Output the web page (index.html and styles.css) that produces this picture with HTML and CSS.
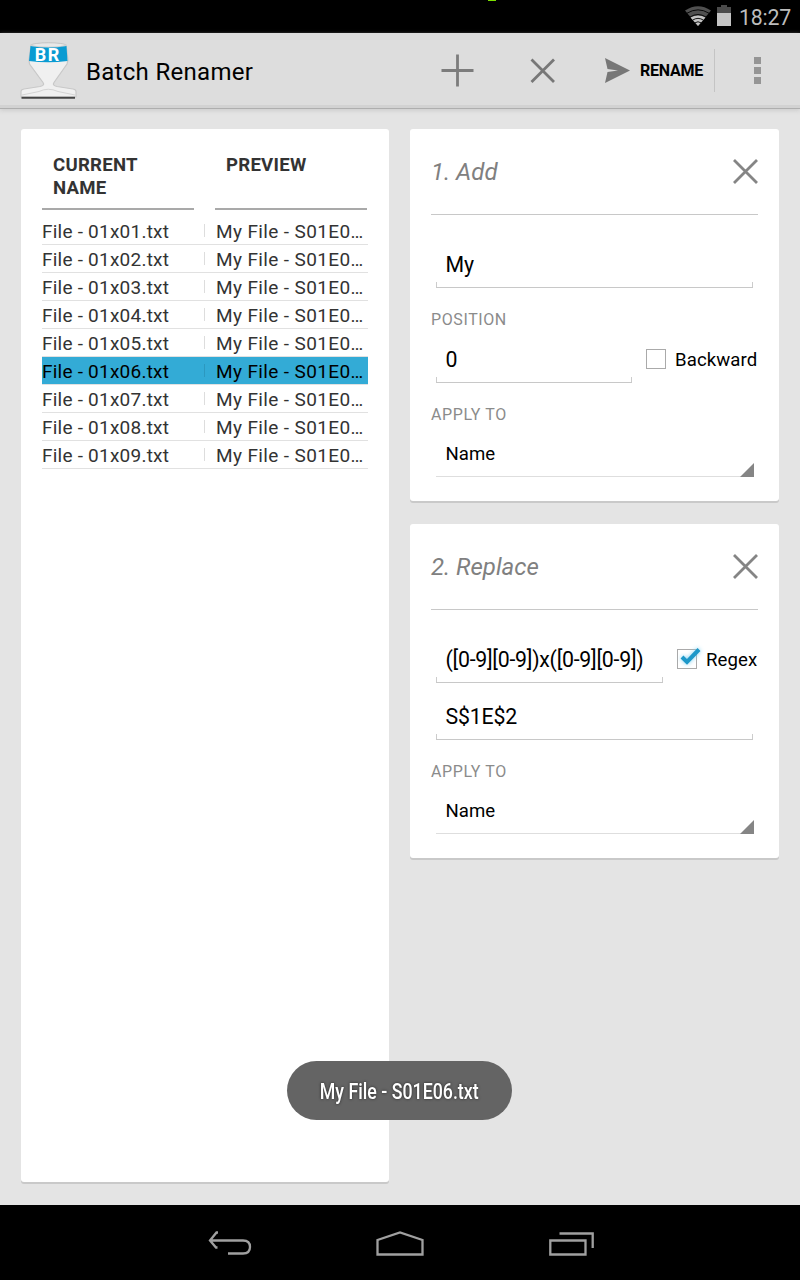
FILE: index.html
```html
<!DOCTYPE html>
<html lang="en">
<head>
<meta charset="utf-8">
<title>Batch Renamer</title>
<link rel="stylesheet" href="styles.css">
</head>
<body>
<div class="screen">
  <div class="status">
    <i class="notch"></i>
    <svg class="wifi" width="26" height="20" viewBox="0 0 26 20"><path d="M0 4.500Q13-4 26 4.500L13 20Z" fill="#505050"/><path d="M5.500 11.500Q13 7.500 20.500 11.500L13 20Z" fill="#c4c4c4"/><path d="M2 7.200Q13 .5 24 7.200M5 11Q13 6 21 11M7.500 14.200Q13 10.500 18.500 14.200M9.500 17Q13 14.500 16.500 17" fill="none" stroke="#000" stroke-width=".9"/></svg>
    <svg class="battery" width="14" height="21" viewBox="0 0 14 21"><path d="M0 2h4V0h6v2h4v6H0z" fill="#4b4b4b"/><path d="M0 8h14v13H0z" fill="#c4c4c4"/></svg>
    <span class="clock"><span class="t">18:27</span></span>
  </div>
  <header class="bar">
    <svg class="logo" width="58" height="60" viewBox="0 0 58 60"><path d="M1 56V50.500Q1 48.500 4 48L20 45.500Q25 44.500 23 41.500L9.500 23 9 19 11 4Q28 0 46 4L48 19 47 23 34 41.500Q32 44.500 37 45.500L53 48Q56 48.500 56 50.500V56Z" fill="#f0f0f0" stroke="#c8c8c8" stroke-width="1.200"/><path d="M2 54L19 50.500Q28 46 38 50.500L55 54" fill="none" stroke="#d4d4d4"/><ellipse cx="28.500" cy="4" rx="17" ry="2.200" fill="#e8e8e8" stroke="#bbb" stroke-width=".7"/><path d="M10.500 5Q28 8 46.500 5L47.500 20Q28 22.500 9 20Z" fill="#0a9bd2"/><path d="M1.500 56.800H55" stroke="#444" stroke-width="2"/><text x="14.700" y="19.500" class="br">BR</text></svg>
    <span class="app"><span class="t">Batch Renamer</span></span>
    <svg class="plus" width="34" height="34" viewBox="0 0 34 34"><path d="M16.500 .5v32M.5 16.500h32" stroke="#7c7c7c" stroke-width="2.800"/></svg>
    <svg class="cross" width="26" height="26" viewBox="0 0 26 26"><path d="M1.500 1.500l22.500 22.500M24 1.500l-22.500 22.500" stroke="#777" stroke-width="2.800"/></svg>
    <svg class="send" width="26" height="26" viewBox="0 0 26 26"><path d="M0 0L25 12.500 0 25 2.500 14 13 12.500 2.500 11Z" fill="#777"/></svg>
    <span class="rename"><span class="t">RENAME</span></span>
    <i class="sep"></i>
    <span class="dots"><i></i><i></i><i></i></span>
  </header>
  <main class="content">
    <section class="card files">
      <div class="heads"><div class="head"><span class="t">CURRENT<br>NAME</span></div><div class="head"><span class="t">PREVIEW</span></div></div>
      <div class="row"><span class="cur"><span class="t">File - 01x01.txt</span></span><span class="pre"><span class="t">My File - S01E0…</span></span></div>
      <div class="row"><span class="cur"><span class="t">File - 01x02.txt</span></span><span class="pre"><span class="t">My File - S01E0…</span></span></div>
      <div class="row"><span class="cur"><span class="t">File - 01x03.txt</span></span><span class="pre"><span class="t">My File - S01E0…</span></span></div>
      <div class="row"><span class="cur"><span class="t">File - 01x04.txt</span></span><span class="pre"><span class="t">My File - S01E0…</span></span></div>
      <div class="row"><span class="cur"><span class="t">File - 01x05.txt</span></span><span class="pre"><span class="t">My File - S01E0…</span></span></div>
      <div class="row selected"><span class="cur"><span class="t">File - 01x06.txt</span></span><span class="pre"><span class="t">My File - S01E0…</span></span></div>
      <div class="row"><span class="cur"><span class="t">File - 01x07.txt</span></span><span class="pre"><span class="t">My File - S01E0…</span></span></div>
      <div class="row"><span class="cur"><span class="t">File - 01x08.txt</span></span><span class="pre"><span class="t">My File - S01E0…</span></span></div>
      <div class="row"><span class="cur"><span class="t">File - 01x09.txt</span></span><span class="pre"><span class="t">My File - S01E0…</span></span></div>
    </section>
    <div class="actions">
      <section class="card action">
        <div class="title"><span class="t">1. Add</span><svg width="26" height="26" viewBox="0 0 26 26"><path d="M2 1l23 23M25 1l-23 23" stroke="#858585" stroke-width="2.800"/></svg></div>
        <div class="line first"><div class="field"><span class="t">My</span></div></div>
        <div class="label">POSITION</div>
        <div class="line position"><div class="field"><span class="t">0</span></div><i class="box"></i><span class="check">Backward</span></div>
        <div class="label">APPLY TO</div>
        <div class="spinner"><span class="t">Name</span></div>
      </section>
      <section class="card action">
        <div class="title"><span class="t">2. Replace</span><svg width="26" height="26" viewBox="0 0 26 26"><path d="M2 1l23 23M25 1l-23 23" stroke="#858585" stroke-width="2.800"/></svg></div>
        <div class="line first regex"><div class="field"><span class="t">([0-9][0-9])x([0-9][0-9])</span></div><i class="box on"><svg width="24" height="22" viewBox="0 0 24 22"><path d="M4 10l5 5L21 2.500" fill="none" stroke="#1c98c9" stroke-width="4"/></svg></i><span class="check">Regex</span></div>
        <div class="line second"><div class="field"><span class="t">S$1E$2</span></div></div>
        <div class="label">APPLY TO</div>
        <div class="spinner"><span class="t">Name</span></div>
      </section>
    </div>
  </main>
  <nav class="nav">
    <svg width="44" height="26" viewBox="0 0 44 26"><path d="M10 1.500H8.500L2 9.500 8 16.500H9.500M2 9.500H35Q42 9.500 42 16T35 22.500H20" fill="none" stroke="#a0a0a0" stroke-width="2.300"/></svg>
    <svg width="48" height="26" viewBox="0 0 48 26"><path d="M1.500 23.500V9L24 1.500 46.500 9V23.500Z" fill="none" stroke="#a0a0a0" stroke-width="2.300"/></svg>
    <svg width="46" height="26" viewBox="0 0 46 26"><path d="M2.300 9.500H37.500V23.500H2.300ZM11.500 2.500H44.700V17" fill="none" stroke="#a0a0a0" stroke-width="2.300"/></svg>
  </nav>
  <div class="toast"><span>My File - S01E06.txt</span></div>
</div>
</body>
</html>
```
FILE: styles.css
```css
* { box-sizing: border-box; }
body { margin: 0; font-family: Roboto, sans-serif; }
svg { display: block; flex: none; }
.t, .check { white-space: nowrap; }
.screen { position: relative; width: 800px; height: 1280px; display: flex; flex-direction: column; background: #e4e4e4; overflow: hidden; }
.status { height: 33px; background: #000; display: flex; justify-content: flex-end; padding: 5px 8px 0 0; color: #bdbdbd; }
.notch { position: absolute; left: 488px; top: 0; width: 8px; height: 1px; background: #7be000; }
.wifi { margin: 1px 6px 0 0; }
.battery { margin-right: 8px; }
.clock { font-size: 21.3px; line-height: 26px; width: 53px; letter-spacing: -.2px; }
.bar { height: 76px; background: #ddd; border-bottom: 1px solid #aeaeae; box-shadow: inset 0 -3px #d2d2d2, 0 2px 4px #cfcfcf; display: flex; padding-left: 20px; flex: none; }
.logo { margin-top: 8px; }
.br { font: bold 18px Roboto; fill: #fff; letter-spacing: 1.5px; }
.app { margin: 25px 0 0 8px; width: 355px; font-size: 24px; line-height: 29px; letter-spacing: .3px; }
.plus { margin: 21px 0 0 0; }
.cross { margin: 25px 0 0 55px; }
.send { margin: 25px 0 0 49px; }
.rename { margin: 27px 0 0 9px; width: 65px; font-size: 16px; font-weight: 700; line-height: 21px; letter-spacing: -.25px; }
.sep { width: 1px; height: 43px; margin: 16px 0 0 9px; background: #c4c4c4; }
.dots { display: flex; flex-direction: column; gap: 3px; margin: 24px 0 0 39px; }
.dots i { width: 7px; height: 7px; background: #959595; }
.content { height: 1096px; padding: 20px 21px 0; display: flex; gap: 21px; align-items: flex-start; }
.card { background: #fff; border-radius: 3px; box-shadow: 0 2px #c9c9c9; }
.files { width: 368px; height: 1053px; padding: 0 21px; }
.heads { display: flex; gap: 21px; height: 88px; padding-top: 24px; }
.head { width: 152px; height: 57px; border-bottom: 2px solid #a9a9a9; padding: 1px 0 0 11px; font-size: 18.6px; font-weight: 700; line-height: 23px; color: #333; letter-spacing: .25px; }
.row { display: flex; width: 326px; height: 28px; border-bottom: 1px solid #e1e1e1; font-size: 19px; color: #333; align-items: center; }
.row.selected { background: #33abd6; color: #000; }
.cur { width: 163px; height: 13px; border-right: 1px solid #ddd; line-height: 16px; letter-spacing: .23px; }
.pre { height: 13px; line-height: 16px; padding-left: 11px; letter-spacing: .37px; }
.selected .cur { border-color: #2c98bf; }
.actions { width: 369px; display: flex; flex-direction: column; gap: 23px; }
.action { padding: 0 21px 24px; }
.title { height: 86px; border-bottom: 1px solid #c8c8c8; display: flex; justify-content: space-between; align-items: center; font-size: 24px; font-style: italic; color: #808080; }
.title .t { padding-top: 1px; }
.line { display: flex; align-items: flex-end; padding-left: 5px; }
.field { position: relative; width: 317px; height: 46px; border-bottom: 1px solid #c8c8c8; padding-left: 9.5px; font-size: 21.3px; line-height: 46px; color: #000; }
.field::before { content: ""; position: absolute; left: 0; right: 0; bottom: 0; height: 5px; border: solid #ccc; border-width: 0 1px; }
.first { height: 73px; }
.position { height: 52px; }
.position .field { width: 196px; }
.regex .field { width: 227px; letter-spacing: -.26px; }
.second { height: 57px; }
.second .field { letter-spacing: -.2px; }
.label { height: 43px; padding-top: 21px; line-height: 22px; font-size: 16px; color: #8b8b8b; letter-spacing: .6px; }
.box { position: relative; width: 20px; height: 20px; border: 1.5px solid #aaa; margin: 0 9px 14px 14px; }
.box svg { position: absolute; left: 0; top: -3px; filter: drop-shadow(0 0 2px #7fd0f0); }
.check { font-size: 18.6px; line-height: 22px; margin-bottom: 12px; color: #000; letter-spacing: .1px; }
.spinner { position: relative; height: 51px; margin: 0 4px 0 5px; padding: 17px 0 0 9.5px; border-bottom: 1px solid #dedede; font-size: 18.6px; line-height: 22px; color: #000; }
.spinner::after { content: ""; position: absolute; right: 0; bottom: -1px; border: 7px solid transparent; border-right-color: #858585; border-bottom-color: #858585; }
.nav { height: 75px; background: #000; display: flex; gap: 124px; padding: 26px 0 0 208px; }
.toast { position: absolute; left: 287px; top: 1061px; width: 225px; height: 59px; border-radius: 29.5px; background: #646464; color: #fff; display: flex; align-items: center; justify-content: center; font-size: 21.3px; font-weight: 500; text-shadow: 0 0 3px #222; white-space: nowrap; padding-top: 2px; }
.toast span { transform: scaleX(.835); }
```
